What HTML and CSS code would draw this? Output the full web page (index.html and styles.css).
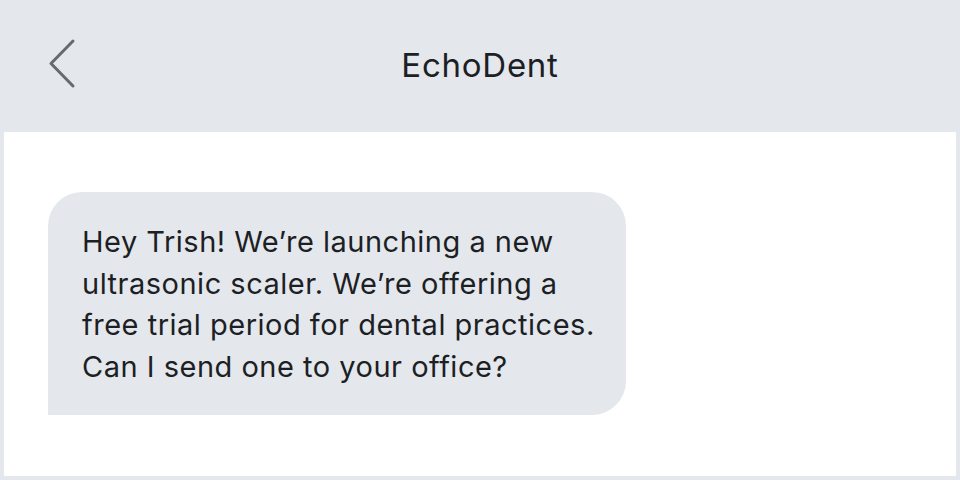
FILE: index.html
```html
<!doctype html>
<html>
<head>
	<title>EchoDent</title>
	<link rel="stylesheet" href="styles.css">
</head>
<body>
	<div id="header">
		<button class="back" type="button" aria-label="Back">
			<svg width="30" height="52" viewBox="0 0 30 52">
				<path d="M25 3 L3 25.5 L25 48" fill="none" stroke="#656a70" stroke-width="3" stroke-linecap="round" stroke-linejoin="round"/>
			</svg>
		</button>
		<div class="title">EchoDent</div>
	</div>
	<div id="thread">
		<div class="bubble">
			Hey Trish! We’re launching a new<br>
			ultrasonic scaler. We’re offering a<br>
			free trial period for dental practices.<br>
			Can I send one to your office?
		</div>
	</div>
</body>
</html>
```

FILE: styles.css
```css
html, body {
	margin: 0;
	padding: 0;
	width: 100%;
	height: 100%;
	box-sizing: border-box;
}

body {
	background-color: #e4e7ec;
	font-family: Inter, "Noto Sans", sans-serif;
	color: #1c1f24;
	padding: 0 4px 4px 4px;
	display: flex;
	flex-direction: column;
}

#header {
	height: 132px;
	margin: 0 -4px;
	position: relative;
	display: flex;
	align-items: center;
	justify-content: center;
}

#header .back {
	position: absolute;
	left: 48px;
	top: 38px;
	padding: 0;
	border: none;
	background: none;
}

#header .title {
	font-size: 33px;
	letter-spacing: 0.75px;
	margin-top: -2px;
}

#thread {
	flex: 1;
	background-color: #fff;
	padding: 60px 44px 0 44px;
}

.bubble {
	display: inline-block;
	width: 520px;
	white-space: nowrap;
	background-color: #e4e7ec;
	border-radius: 34px 34px 34px 0;
	padding: 29px 24px 27px 34px;
	font-size: 29px;
	letter-spacing: 0.5px;
	line-height: 41.7px;
}
```
